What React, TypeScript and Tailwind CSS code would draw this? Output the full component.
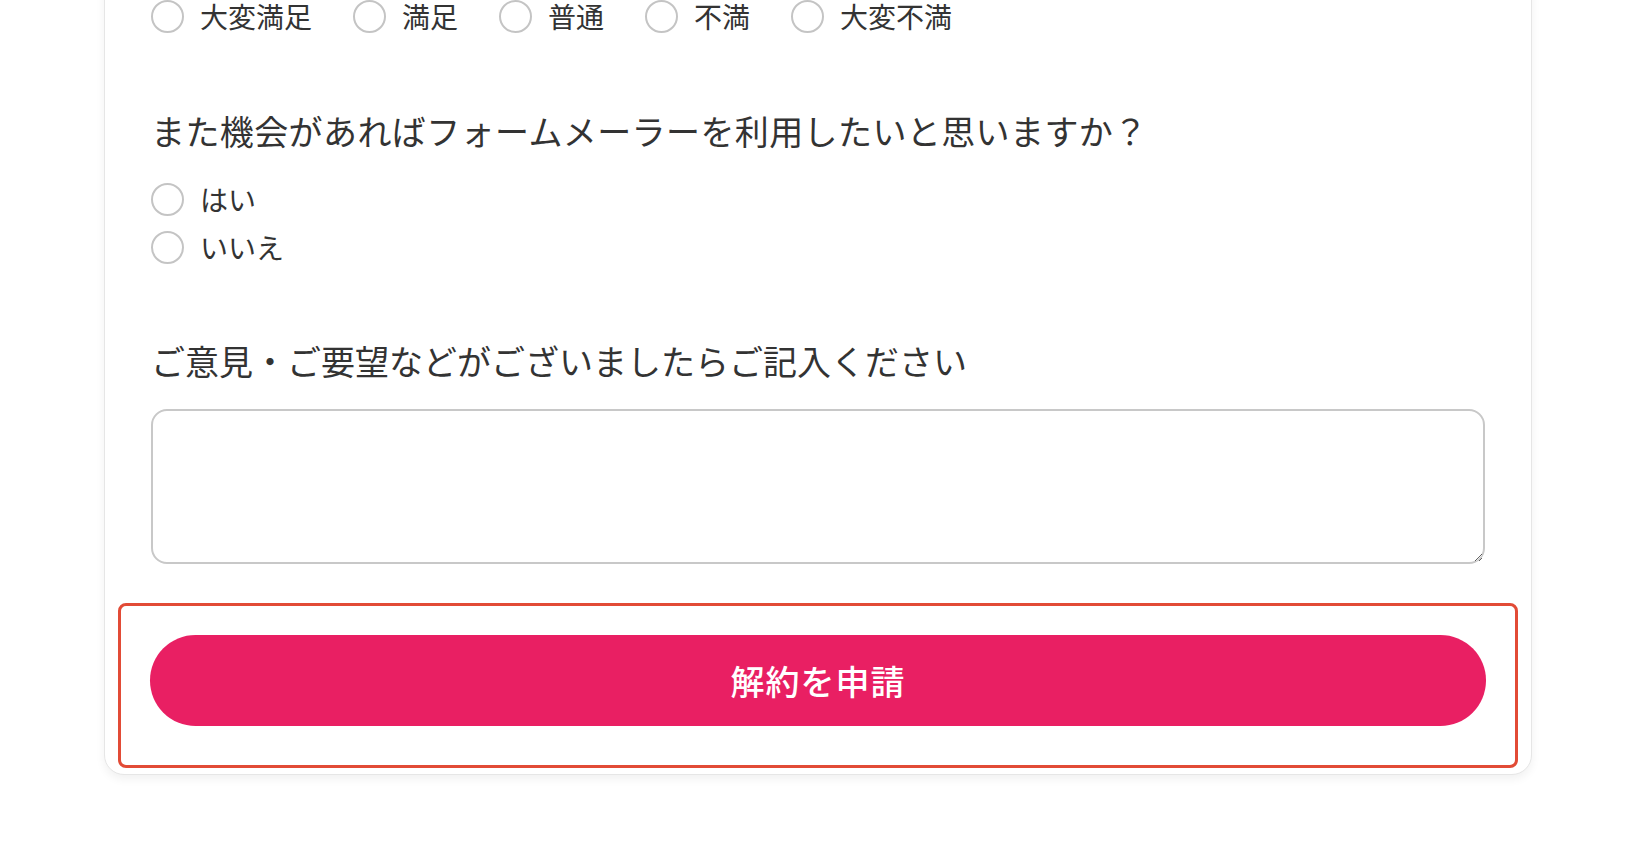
import React from "react";

const ratings = ["大変満足", "満足", "普通", "不満", "大変不満"];
const again = ["はい", "いいえ"];

const Radio = ({ label }: { label: string }) => (
  <label className="flex items-center h-[40px] gap-[16px] text-[28px] text-[#333]">
    <span className="w-[33px] h-[33px] rounded-full border-2 border-[#c4c4c4] bg-white shrink-0" />
    <span className="leading-none">{label}</span>
  </label>
);

const App = () => {
  return (
    <div
      className="min-h-screen w-full bg-white overflow-hidden"
      style={{ fontFamily: '"Noto Sans CJK JP", "Noto Sans", sans-serif' }}
    >
      <div className="ml-[104px] w-[1428px] -mt-[45px] rounded-[20px] border border-[#e6e6e6] bg-white shadow-[0_4px_10px_rgba(0,0,0,0.06)] px-[46px] pt-[40px] pb-[6px]">
        {/* Satisfaction */}
        <div className="flex gap-[41px]">
          {ratings.map((r) => (
            <Radio key={r} label={r} />
          ))}
        </div>

        {/* Use again */}
        <p className="mt-[71px] text-[34px] leading-[48px] tracking-[0.4px] text-[#333]">
          また機会があればフォームメーラーを利用したいと思いますか？
        </p>
        <div className="mt-[24px] flex flex-col gap-[8px]">
          {again.map((r) => (
            <Radio key={r} label={r} />
          ))}
        </div>

        {/* Comment */}
        <p className="mt-[70px] text-[34px] leading-[48px] text-[#333]">
          ご意見・ご要望などがございましたらご記入ください
        </p>
        <textarea className="mt-[24px] block w-full h-[155px] rounded-[16px] border-2 border-[#c8c8c8] bg-white outline-none" />

        {/* Submit */}
        <div className="mt-[39px] -mx-[33px] rounded-[8px] border-[3px] border-[#e24b36] px-[29px] pt-[29px] pb-[39px]">
          <button className="w-full h-[91px] rounded-full bg-[#e91f63] text-white text-[34px] font-medium tracking-[1px] leading-none">
            解約を申請
          </button>
        </div>
      </div>
    </div>
  );
};

export default App;
